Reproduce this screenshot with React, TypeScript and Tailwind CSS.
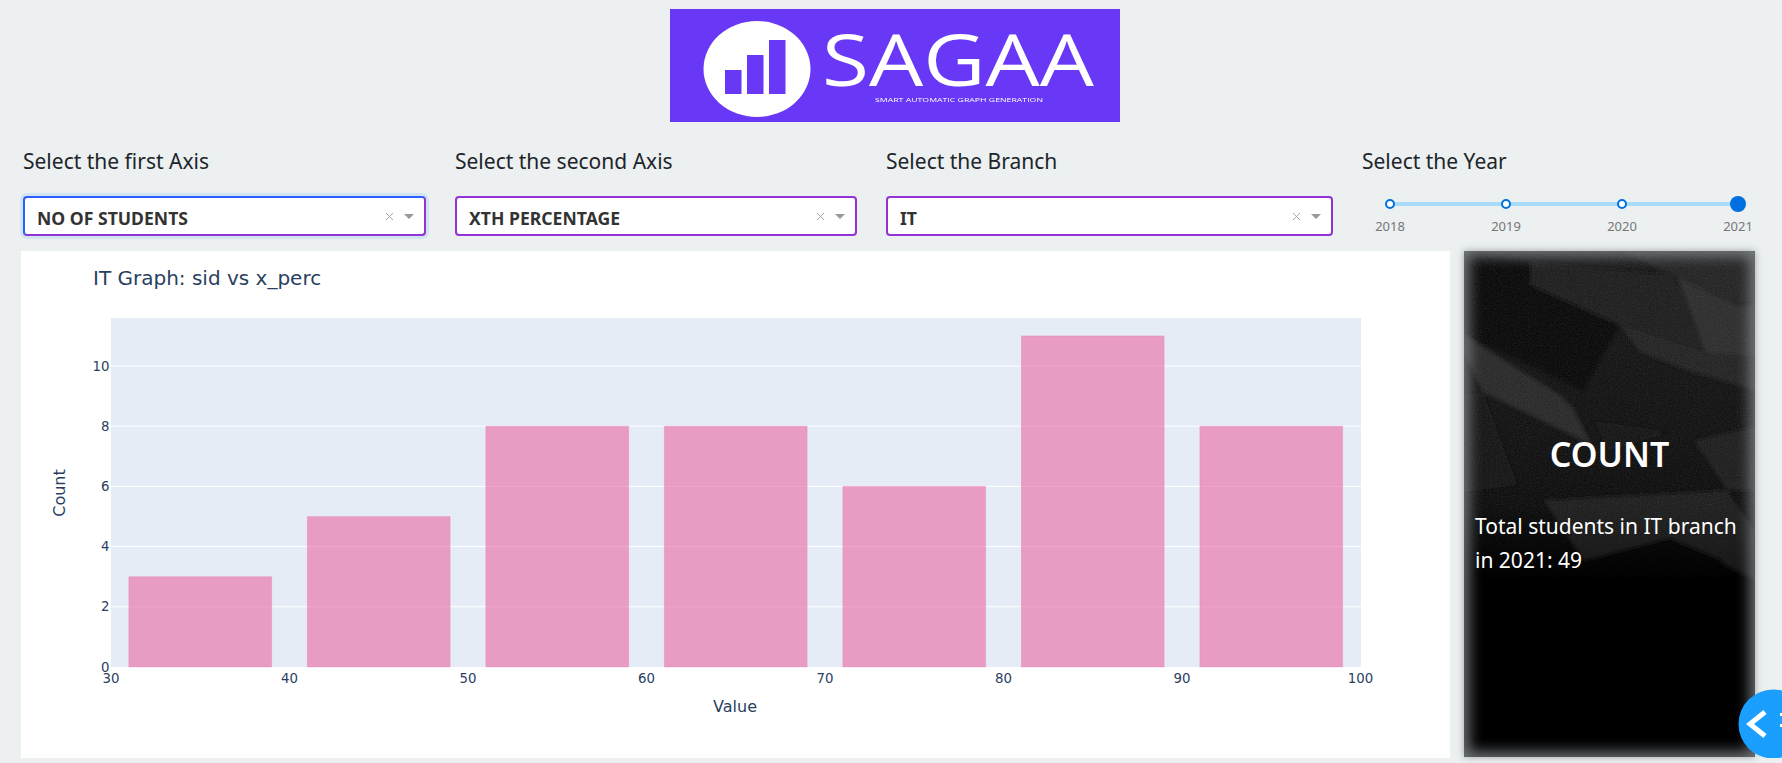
import { X } from "lucide-react";

const bars = [
  { from: 31, to: 39, count: 3 },
  { from: 41, to: 49, count: 5 },
  { from: 51, to: 59, count: 8 },
  { from: 61, to: 69, count: 8 },
  { from: 71, to: 79, count: 6 },
  { from: 81, to: 89, count: 11 },
  { from: 91, to: 99, count: 8 },
];
const xTicks = [30, 40, 50, 60, 70, 80, 90, 100];
const yTicks = [0, 2, 4, 6, 8, 10];
const years = ["2018", "2019", "2020", "2021"];

const px = (v: number) => 90 + (v - 30) * 17.85;
const py = (c: number) => 416 - c * 30.1;

function Logo() {
  return (
    <svg width="450" height="113" viewBox="0 0 450 113" className="block blur-[0.5px]">
      <rect width="450" height="113" fill="#6937f6" />
      <ellipse cx="87" cy="60" rx="53.5" ry="48" fill="#ffffff" />
      <rect x="55" y="61" width="16.5" height="24" fill="#6937f6" />
      <rect x="77" y="46" width="16.5" height="39" fill="#6937f6" />
      <rect x="99" y="31" width="16.5" height="54" fill="#6937f6" />
      <text x="152" y="77" fill="#ffffff" fontSize="71" fontFamily="'Open Sans', sans-serif" textLength="272" lengthAdjust="spacingAndGlyphs">
        SAGAA
      </text>
      <text x="205" y="93" fill="#ffffff" fontSize="5" fontFamily="'Open Sans', sans-serif" textLength="168" lengthAdjust="spacingAndGlyphs">
        SMART AUTOMATIC GRAPH GENERATION
      </text>
    </svg>
  );
}

function Dropdown({ value, focused }: { value: string; focused?: boolean }) {
  return (
    <div
      className={
        focused
          ? "flex h-[40px] items-center rounded border-2 border-[#9333d6] border-t-[#2a60ff] border-l-[#2a60ff] bg-white pl-[12px] pr-[10px] shadow-[0_0_0_3px_#d3e4f1]"
          : "flex h-[40px] items-center rounded border-2 border-[#9333d6] bg-white pl-[12px] pr-[10px]"
      }
    >
      <span className="flex-1 pt-[3px] text-[17.6px] font-bold leading-[24px] text-[#333333]">{value}</span>
      <X size={13} strokeWidth={1.5} className="text-[#999999]" />
      <span className="ml-[8px] h-0 w-0 border-x-[5px] border-t-[5px] border-x-transparent border-t-[#999999]" />
    </div>
  );
}

function YearSlider() {
  return (
    <div className="relative mt-[-1px] pl-[28px] pr-[17px]">
      <div className="absolute left-[28px] right-[17px] top-[7px] h-[4px] bg-[#a6dcf7]" />
      <div className="relative flex justify-between">
        {years.map((y, i) => (
          <div key={y} className="flex w-0 flex-col items-center">
            <div className="flex h-[18px] items-center">
              {i === 3 ? (
                <span className="h-[16px] w-[16px] shrink-0 rounded-full bg-[#0070e0]" />
              ) : (
                <span className="h-[10px] w-[10px] shrink-0 rounded-full border-2 border-[#0070e0] bg-white" />
              )}
            </div>
            <span className="mt-[4px] text-[13px] leading-[18px] text-[#777777]">{y}</span>
          </div>
        ))}
      </div>
    </div>
  );
}

function Chart() {
  const font = "'DejaVu Sans', sans-serif";
  return (
    <svg width="1429" height="507" viewBox="0 0 1429 507" className="block">
      <rect x="90" y="67" width="1250" height="349" fill="#e5ecf6" />
      {yTicks.slice(1).map((t) => (
        <line key={t} x1="90" x2="1340" y1={py(t)} y2={py(t)} stroke="#ffffff" strokeWidth="1" />
      ))}
      {bars.map((b) => (
        <rect
          key={b.from}
          x={px(b.from)}
          y={py(b.count)}
          width={px(b.to) - px(b.from)}
          height={b.count * 30.1}
          fill="#ea67a3"
          fillOpacity="0.6"
          stroke="#ea67a3"
          strokeOpacity="0.25"
        />
      ))}
      <g fill="#2a3f5f" fontFamily={font} fontSize="13.3">
        {xTicks.map((t) => (
          <text key={t} x={px(t)} y="432" textAnchor="middle">
            {t}
          </text>
        ))}
        {yTicks.map((t) => (
          <text key={t} x="88.5" y={py(t) + 4.5} textAnchor="end">
            {t}
          </text>
        ))}
      </g>
      <text x="72" y="34" fill="#2a3f5f" fontFamily={font} fontSize="20">
        IT Graph: sid vs x_perc
      </text>
      <text x="714" y="461" fill="#2a3f5f" fontFamily={font} fontSize="16" textAnchor="middle">
        Value
      </text>
      <text x="0" y="0" fill="#2a3f5f" fontFamily={font} fontSize="16" textAnchor="middle" transform="translate(44 242) rotate(-90)">
        Count
      </text>
    </svg>
  );
}

function CardTexture() {
  return (
    <svg width="291" height="506" viewBox="0 0 291 506" className="absolute inset-0">
      <defs>
        <linearGradient id="base" x1="0" y1="0" x2="0" y2="1">
          <stop offset="0" stopColor="#101010" />
          <stop offset="0.38" stopColor="#080808" />
          <stop offset="0.6" stopColor="#000000" />
        </linearGradient>
        <linearGradient id="fade" x1="0" y1="0" x2="0" y2="1">
          <stop offset="0.5" stopColor="#ffffff" />
          <stop offset="0.66" stopColor="#000000" />
        </linearGradient>
        <mask id="fadeMask">
          <rect width="291" height="506" fill="url(#fade)" />
        </mask>
        <filter id="grain">
          <feTurbulence type="fractalNoise" baseFrequency="0.9" numOctaves="2" />
          <feColorMatrix type="saturate" values="0" />
        </filter>
        <filter id="soft">
          <feGaussianBlur stdDeviation="2" />
        </filter>
      </defs>
      <rect width="291" height="506" fill="url(#base)" />
      <g filter="url(#soft)">
        <polygon points="0,0 66,11 66,34 156,74 120,140 0,84" fill="#050505" />
        <polygon points="156,0 291,0 291,52 273,52 213,26" fill="#1a1a1a" />
        <polygon points="66,11 209,24 241,101 156,74 66,34" fill="#131313" />
        <polygon points="213,26 273,54 291,54 291,141 241,101" fill="#282828" />
        <polygon points="156,74 241,101 291,104 291,139 229,121 176,101" fill="#1f1f1f" />
        <polygon points="0,84 36,107 96,144 109,157 128,194 19,141 0,101" fill="#242424" />
        <polygon points="0,144 19,141 53,234 0,241" fill="#101010" />
        <polygon points="130,170 206,181 145,200" fill="#0e0e0e" />
        <polygon points="230,190 291,175 291,240 263,239" fill="#181818" />
        <polygon points="79,249 263,239 291,280 291,329 206,287 120,310" fill="#141414" />
        <polygon points="24,357 206,287 260,310 120,390" fill="#040404" />
      </g>
      <rect width="291" height="506" filter="url(#grain)" opacity="0.18" mask="url(#fadeMask)" />
    </svg>
  );
}

function ToggleButton() {
  return (
    <svg width="69" height="69" viewBox="0 0 69 69" className="absolute left-[1738px] top-[689px]">
      <circle cx="35" cy="35" r="34.5" fill="#1a9fff" />
      <polyline points="27,23 12,35 27,47" fill="none" stroke="#ffffff" strokeWidth="5" />
      <rect x="42" y="24" width="2" height="3" fill="#ffffff" />
      <rect x="42" y="35" width="2" height="3" fill="#ffffff" />
    </svg>
  );
}

export default function App() {
  return (
    <div className="relative h-screen overflow-hidden bg-[#ecf0f1] font-['Noto_Sans',sans-serif] text-[#212529]">
      <div className="flex justify-center pl-[8px] pt-[9px]">
        <Logo />
      </div>

      <div className="mt-[25px] flex gap-[29px] pl-[23px] pr-[27px]">
        <div className="w-[403px]">
          <p className="mb-[21px] text-[21px] leading-[28px]">Select the first Axis</p>
          <Dropdown value="NO OF STUDENTS" focused />
        </div>
        <div className="w-[402px]">
          <p className="mb-[21px] text-[21px] leading-[28px]">Select the second Axis</p>
          <Dropdown value="XTH PERCENTAGE" />
        </div>
        <div className="w-[447px]">
          <p className="mb-[21px] text-[21px] leading-[28px]">Select the Branch</p>
          <Dropdown value="IT" />
        </div>
        <div className="flex-1">
          <p className="mb-[21px] text-[21px] leading-[28px]">Select the Year</p>
          <YearSlider />
        </div>
      </div>

      <div className="mt-[15px] flex pl-[21px]">
        <div className="h-[507px] w-[1429px] bg-white">
          <Chart />
        </div>
        <div className="relative ml-[14px] h-[506px] w-[291px] overflow-hidden shadow-[0_0_7px_rgba(120,125,130,0.7)]">
          <CardTexture />
          <div className="absolute inset-0 shadow-[inset_0_0_14px_5px_rgba(150,155,160,0.75)]" />
          <div className="relative px-[11px] pt-[179px] text-white">
            <h2 className="text-center text-[34px] font-semibold leading-[48px]">COUNT</h2>
            <p className="mt-[31px] text-[21px] leading-[34px]">Total students in IT branch in 2021: 49</p>
          </div>
        </div>
      </div>

      <ToggleButton />
    </div>
  );
}
